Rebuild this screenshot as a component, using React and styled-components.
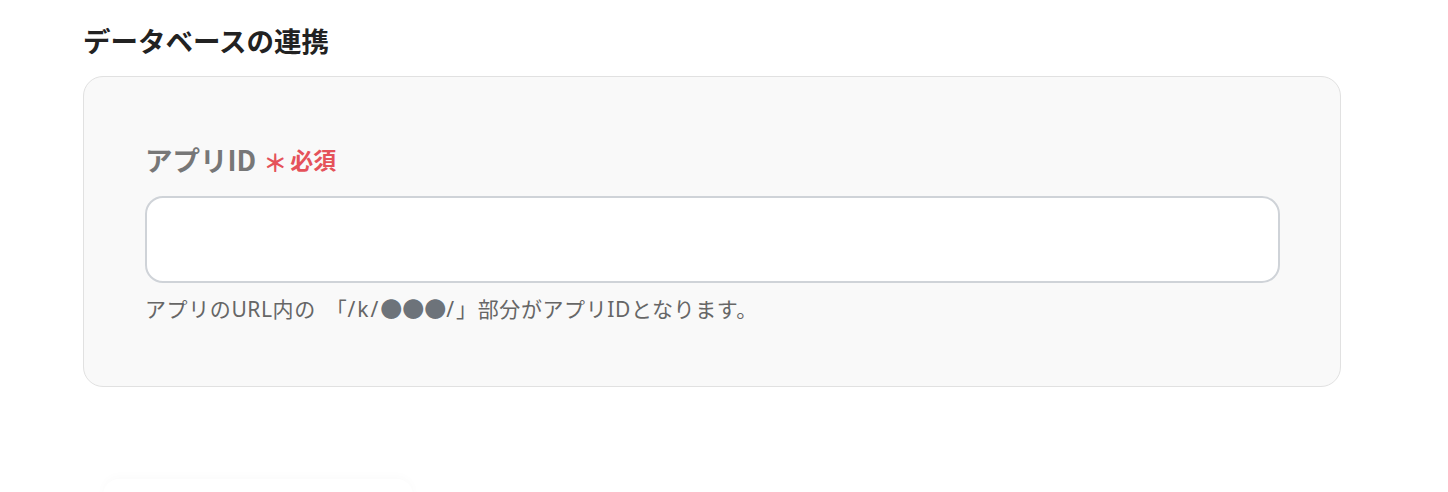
import React from "react";
import styled, { createGlobalStyle } from "styled-components";

const Global = createGlobalStyle`
  html, body { margin: 0; padding: 0; background: #ffffff; }
  body { font-family: "Noto Sans CJK JP", "Noto Sans", sans-serif; }
  * { box-sizing: border-box; }
`;

const Page = styled.main`
  width: 1448px;
  height: 492px;
  overflow: hidden;
  padding: 20px 107px 0 83px;
  display: flex;
  flex-direction: column;
`;

const Heading = styled.h2`
  margin: 0 0 16px;
  font-size: 27.5px;
  line-height: 40px;
  font-weight: 700;
  color: #222222;
`;

const Card = styled.section`
  flex-shrink: 0;
  width: 1258px;
  height: 311px;
  border: 1.5px solid #e1e1e1;
  border-radius: 20px;
  background: #f9f9f9;
  padding: 62px 61px 0 61px;
  display: flex;
  flex-direction: column;
`;

const Label = styled.label`
  display: flex;
  align-items: center;
  gap: 7px;
  height: 40px;
  font-size: 27.5px;
  font-weight: 700;
  color: #777777;
`;

const Required = styled.span`
  display: flex;
  align-items: center;
  gap: 3px;
  color: #e5525a;
  font-size: 23px;
  font-weight: 700;
`;

const Star = styled.span`
  font-size: 24px;
  line-height: 1;
  position: relative;
  top: 3px;
`;

const Input = styled.input`
  flex-shrink: 0;
  margin-top: 17px;
  width: 1135px;
  height: 87px;
  border: 2px solid #cfd3d8;
  border-radius: 18px;
  background: #ffffff;
  outline: none;
  font-size: 20px;
  padding: 0 20px;
`;

const Help = styled.p`
  margin: 10px 0 0;
  font-family: "Noto Sans", "Noto Sans CJK JP", sans-serif;
  font-size: 21px;
  line-height: 28px;
  letter-spacing: 0.6px;
  color: #666666;
`;

const Bracket = styled.span`
  font-family: "Noto Sans CJK JP", sans-serif;
  margin-left: ${(p) => p.$gap || 0}px;
`;

const Path = styled.span`
  letter-spacing: 2px;
`;

const Dots = styled.span`
  font-family: "Noto Sans CJK JP", sans-serif;
  color: #6d737a;
  font-size: 22px;
  letter-spacing: 0;
`;

const Shadow = styled.div`
  flex-shrink: 0;
  margin-top: 92px;
  margin-left: 20px;
  width: 310px;
  height: 40px;
  border-radius: 16px;
  background: #ffffff;
  box-shadow: 0 -3px 10px rgba(0, 0, 0, 0.018);
`;

export default function App() {
  return (
    <>
      <Global />
      <Page>
        <Heading>データベースの連携</Heading>
        <Card>
          <Label>
            アプリID
            <Required>
              <Star>＊</Star>必須
            </Required>
          </Label>
          <Input type="text" />
          <Help>
            アプリのURL内の<Bracket $gap={10}>「</Bracket>
            <Path>
              /k/<Dots>●●●</Dots>/
            </Path>
            <Bracket>」</Bracket>部分がアプリIDとなります。
          </Help>
        </Card>
        <Shadow />
      </Page>
    </>
  );
}
